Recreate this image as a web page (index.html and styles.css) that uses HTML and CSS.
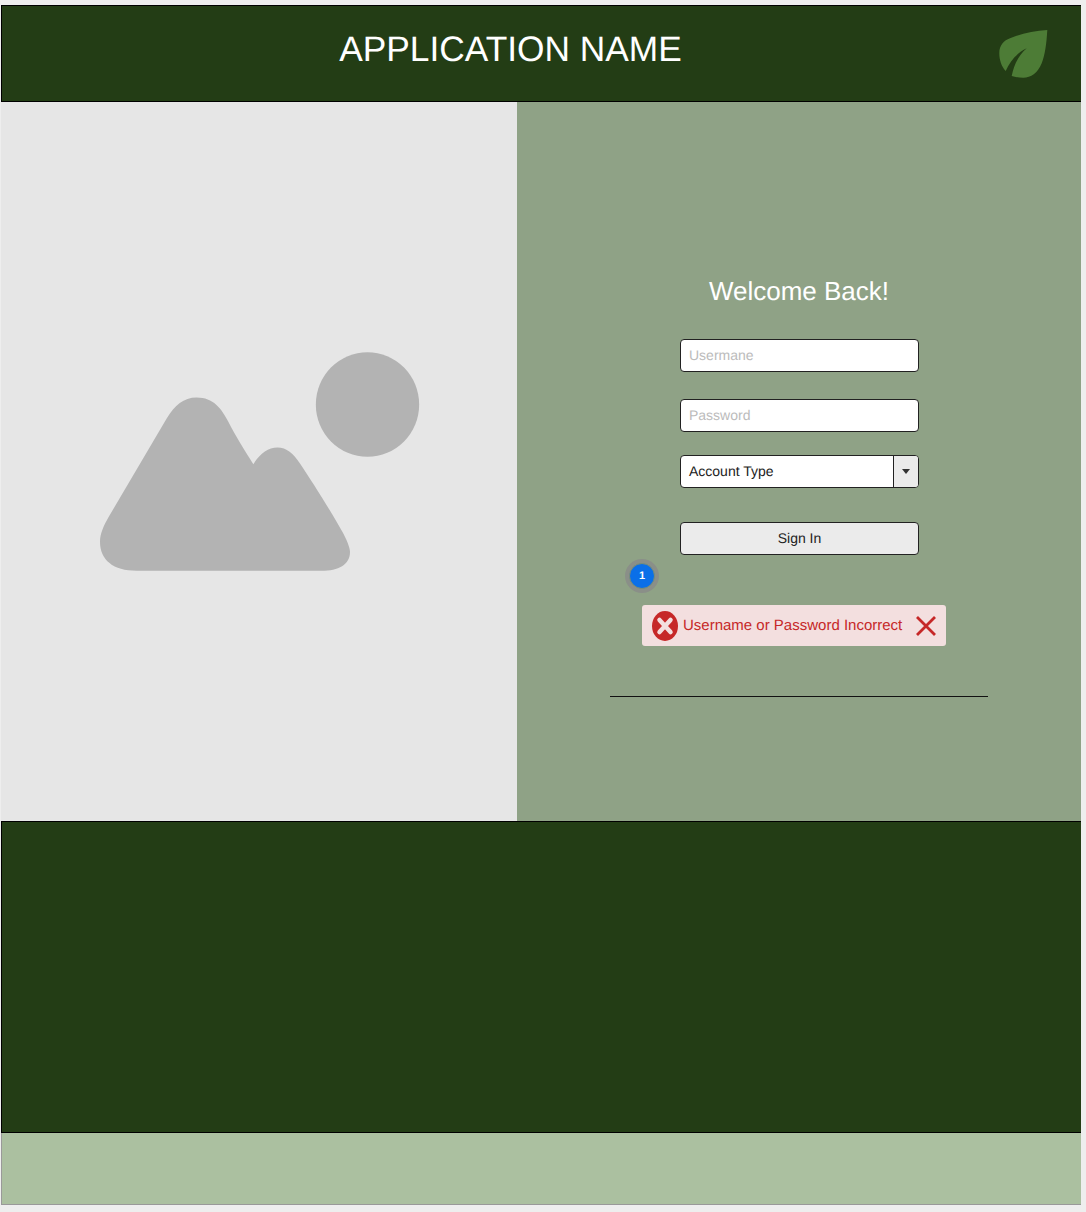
FILE: index.html
```html
<!DOCTYPE html>
<html lang="en">
<head>
    <meta charset="UTF-8">
    <title>Application Name</title>
    <link rel="stylesheet" href="styles.css">
</head>
<body>
    <header class="top-bar">
        <h1 class="app-name">APPLICATION NAME</h1>
        <svg class="leaf" viewBox="0 0 50 50" aria-hidden="true">
            <path d="M48.3 1C47.5 15 46 26 42.7 34.3C38.5 44.5 32 48.7 24.3 48.7C20 48.7 16 48.2 12.7 47C15 35 20 26 27.7 19.3C18 24 11 32 6.7 42C2.5 37.5 0.3 31 0.3 24.3C0.3 16 5 11.5 11 9.3C22 4.5 35 2 48.3 1Z"/>
        </svg>
    </header>

    <main class="main">
        <section class="picture">
            <svg class="placeholder" viewBox="60 36 957 656" aria-hidden="true">
                <path d="M350 172C400 172 425 205 445 245C465 285 490 325 520 372C540 340 565 322 592 322C620 322 640 340 660 370C700 430 760 525 790 580C805 610 810 625 810 635C810 675 775 692 725 692L170 692C100 692 60 660 60 605C60 580 72 555 85 532L260 235C285 195 310 172 350 172Z"/>
                <ellipse cx="862.5" cy="193" rx="155" ry="157"/>
            </svg>
        </section>

        <section class="login">
            <h2 class="welcome">Welcome Back!</h2>
            <form class="login-form">
                <input class="field" type="text" placeholder="Usermane">
                <input class="field field-password" type="password" placeholder="Password">
                <div class="dropdown">
                    <span class="dropdown-label">Account Type</span>
                    <span class="dropdown-arrow"></span>
                </div>
                <button class="sign-in" type="button">Sign In</button>
            </form>
            <div class="alert">
                <span class="step-badge">1</span>
                <svg class="alert-icon" viewBox="0 0 26 30" aria-hidden="true">
                    <ellipse cx="13" cy="15" rx="13" ry="15"/>
                    <path class="alert-cross" d="M7.5 9L18.5 21M18.5 9L7.5 21"/>
                </svg>
                <span class="alert-text">Username or Password Incorrect</span>
                <svg class="alert-close" viewBox="0 0 20 20" aria-hidden="true">
                    <path d="M1 1L19 19M19 1L1 19"/>
                </svg>
            </div>
            <hr class="divider">
        </section>
    </main>

    <section class="footer-top"></section>
    <footer class="footer-bottom"></footer>
</body>
</html>
```

FILE: styles.css
```css
body {
    font-family: "Liberation Sans", Arial, sans-serif;
    background-color: #EEEEEE;
    margin: 5px 0 7px 1px;
    width: 1080px;
    text-rendering: geometricPrecision;
}
.top-bar {
    display: flex;
    align-items: center;
    box-sizing: border-box;
    height: 97px;
    background-color: #233D15;
    border: 1px solid #000;
    border-right: 0;
}
.app-name {
    flex: 1;
    margin: 0;
    padding: 0 0 8px 20px;
    color: white;
    font-size: 35.3px;
    font-weight: normal;
    text-align: center;
}
.leaf {
    width: 50px;
    height: 50px;
    margin-right: 32px;
    fill: #4D7C36;
}
.main {
    display: flex;
    height: 719px;
}
.picture {
    display: flex;
    align-items: center;
    justify-content: center;
    width: 516px;
    background-color: #E6E6E6;
}
.placeholder {
    width: 319px;
    height: 219px;
    fill: #B3B3B3;
    overflow: visible;
}
.login {
    flex: 1;
    display: flex;
    flex-direction: column;
    align-items: center;
    background-color: #8FA286;
}
.welcome {
    margin: 174px 0 0;
    color: white;
    font-size: 26px;
    font-weight: normal;
    line-height: 30px;
}
.login-form {
    display: flex;
    flex-direction: column;
    width: 239px;
    margin-top: 33px;
}
.field {
    box-sizing: border-box;
    height: 33px;
    padding: 0 8px 2px 8.5px;
    border: 1px solid #222;
    border-radius: 4px;
    background-color: white;
    font-family: inherit;
    font-size: 14px;
    text-rendering: geometricPrecision;
}
.field::placeholder {
    color: #BBBBBB;
}
.field-password {
    margin-top: 27px;
}
.dropdown {
    display: flex;
    box-sizing: border-box;
    height: 33px;
    margin-top: 23px;
    border: 1px solid #222;
    border-radius: 4px;
    background-color: white;
    color: #222;
    font-size: 14px;
    line-height: 30px;
    overflow: hidden;
}
.dropdown-label {
    flex: 1;
    padding-left: 8.5px;
}
.dropdown-arrow {
    position: relative;
    width: 24px;
    border-left: 1px solid #222;
    background-color: #EBEBEB;
}
.dropdown-arrow::after {
    content: "";
    position: absolute;
    top: 13px;
    left: 8px;
    border-top: 5px solid #333;
    border-left: 4px solid transparent;
    border-right: 4px solid transparent;
}
.sign-in {
    height: 33px;
    margin-top: 34px;
    padding: 0 0 2px 1px;
    border: 1px solid #222;
    border-radius: 4px;
    background-color: #EBEBEB;
    color: #222;
    font-family: inherit;
    font-size: 14px;
    text-rendering: geometricPrecision;
}
.alert {
    position: relative;
    display: flex;
    align-items: center;
    box-sizing: border-box;
    width: 304px;
    height: 41px;
    margin: 50px 10px 0 0;
    padding: 0 10px;
    border-radius: 3px;
    background-color: #F3DFDF;
    color: #C62828;
    font-size: 15px;
}
.step-badge {
    position: absolute;
    top: -42px;
    left: -13px;
    width: 24px;
    height: 24px;
    border-radius: 50%;
    border: 1px solid #7C8E74;
    box-shadow: 0 0 0 4px #8A8F88;
    background-color: #0A6FE8;
    color: white;
    font-size: 11px;
    font-weight: bold;
    line-height: 24px;
    text-align: center;
}
.alert-icon {
    width: 26px;
    height: 30px;
    fill: #C62828;
}
.alert-cross {
    fill: none;
    stroke: #F3DFDF;
    stroke-width: 4.5;
    stroke-linecap: round;
}
.alert-text {
    flex: 1;
    margin-left: 5px;
}
.alert-close {
    width: 20px;
    height: 20px;
    fill: none;
    stroke: #C62828;
    stroke-width: 2.8;
}
.divider {
    align-self: center;
    box-sizing: border-box;
    width: 378px;
    height: 1px;
    margin: 50px 0 0;
    border: 0;
    background-color: #111;
}
.footer-top {
    box-sizing: border-box;
    height: 312px;
    background-color: #233D15;
    border: 1px solid #000;
    border-right: 0;
}
.footer-bottom {
    box-sizing: border-box;
    height: 72px;
    background-color: #ABC0A0;
    border: 1px solid #999;
    border-top: 0;
    border-right: 0;
}
```
